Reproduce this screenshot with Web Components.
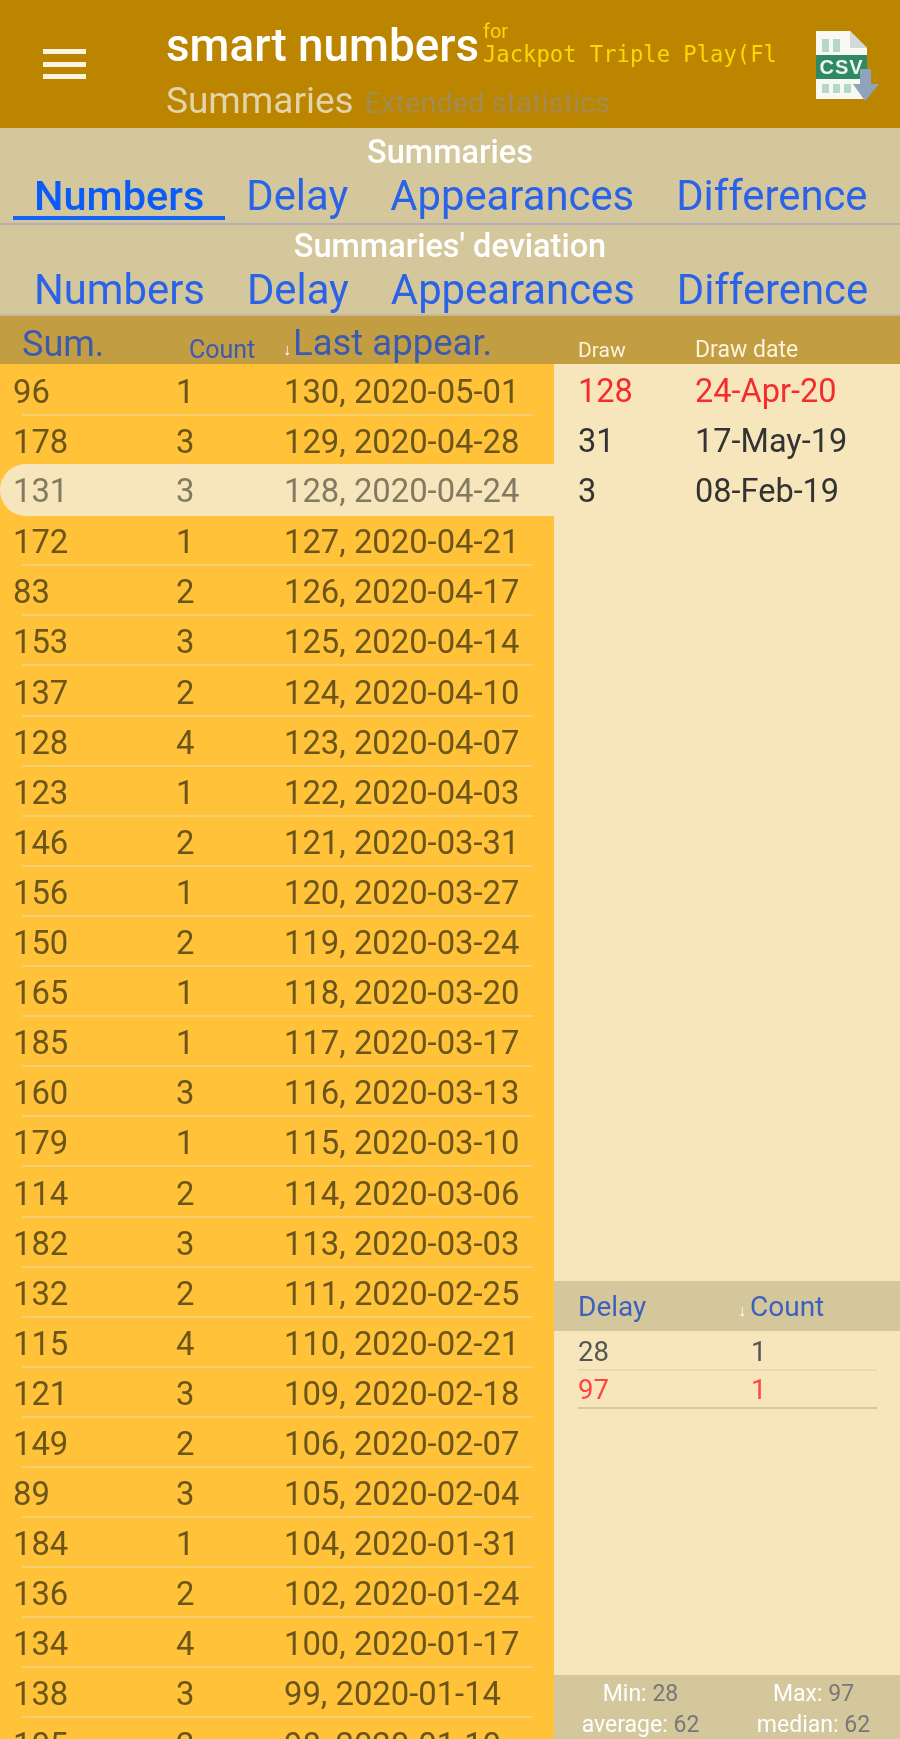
<!DOCTYPE html>
<html>
<head>
<meta charset="utf-8">
<title>smart numbers</title>
<style>
  html, body { margin: 0; height: 1739px; overflow: hidden; background: #f7e6bc; }
  body { font-family: Roboto, "Liberation Sans", sans-serif; }
</style>
</head>
<body>
<stats-app></stats-app>
<script>
class AppHeader extends HTMLElement {
  constructor() {
    super();
    this.attachShadow({ mode: "open" }).innerHTML = `
      <style>
        :host { display: flex; flex: none; height: 128px; background: #bb8500; box-sizing: border-box; padding-left: 43px; align-items: center; position: relative; }
        .burger { width: 43px; height: 30px; display: flex; flex-direction: column; justify-content: space-between; margin-right: 80px; }
        .burger i { display: block; height: 5px; background: #fbf3e0; }
        .main { flex: 1; display: flex; flex-direction: column; }
        .top { display: flex; height: 63px; }
        .title { font-size: 45.8px; font-weight: 500; color: #fff; line-height: 58px; margin-top: 10px; white-space: nowrap; }
        .for { margin: 13px 0 0 4px; color: #fdd800; }
        .for div:first-child { font-size: 20px; line-height: 22px; }
        .for div:last-child { font: 22.2px/25px "DejaVu Sans Mono", monospace; white-space: nowrap; }
        .sub { display: flex; align-items: baseline; gap: 11px; margin-top: 10px; white-space: nowrap; }
        .sub b { font-weight: 400; font-size: 37px; line-height: 42px; color: #e3d3a8; }
        .sub span { font-size: 29px; color: #a48b4e; }
        svg { position: absolute; left: 813px; top: 29px; }
      </style>
      <div class="burger"><i></i><i></i><i></i></div>
      <div class="main">
        <div class="top">
          <div class="title">smart numbers</div>
          <div class="for"><div>for</div><div>Jackpot Triple Play(Fl</div></div>
        </div>
        <div class="sub"><b>Summaries</b><span>Extended statistics</span></div>
      </div>
      <svg width="70" height="74" viewBox="0 0 70 74">
        <path d="M3 2H37L54 19V70H3Z" fill="#f8f8f4"/>
        <path d="M37 2V19H54Z" fill="#d5d8d8"/>
        <g fill="#b5d8c4">
          <rect x="9" y="10" width="7" height="13"/><rect x="20" y="10" width="7" height="13"/>
          <rect x="9" y="55" width="7" height="9"/><rect x="20" y="55" width="7" height="9"/><rect x="31" y="55" width="7" height="9"/>
        </g>
        <rect x="3" y="26" width="51" height="24" fill="#2f8a63"/>
        <text x="28.5" y="45" text-anchor="middle" font-family="Liberation Sans, sans-serif" font-size="20" font-weight="700" fill="#eef5ef" letter-spacing="1">CSV</text>
        <path d="M47 40H58V55H66L52 72L40 55H47Z" fill="#8fa3bb"/>
      </svg>`;
  }
}

class TabBar extends HTMLElement {
  connectedCallback() {
    const active = this.getAttribute("active");
    const tabs = ["Numbers", "Delay", "Appearances", "Difference"]
      .map(t => `<div class="tab ${t === active ? "on" : ""}">${t}</div>`).join("");
    this.attachShadow({ mode: "open" }).innerHTML = `
      <style>
        :host { display: block; flex: none; background: #d5c79c; box-sizing: border-box; height: var(--h); border-bottom: 2px solid var(--line); }
        .head { text-align: center; color: #fff; font-size: 32.5px; font-weight: 500; line-height: 34px; padding-top: var(--pad); }
        .tabs { display: flex; padding-left: 13px; }
        .tab { font-size: 41.8px; line-height: 54px; color: #2a62e8; padding: 0 21px; height: 51px; box-sizing: border-box; }
        .tab.on { color: #0a5cf8; font-size: 41.5px; font-weight: 500; border-bottom: 4px solid #1565f5; }
      </style>
      <div class="head">${this.getAttribute("heading")}</div>
      <div class="tabs">${tabs}</div>`;
  }
}

class SumRow extends HTMLElement {
  connectedCallback() {
    const [sum, count, last] = this.getAttribute("cells").split("|");
    this.attachShadow({ mode: "open" }).innerHTML = `
      <style>
        :host { display: block; height: 50.1px; position: relative; color: #6b5518; font-size: 32.8px; }
        .row { display: grid; grid-template-columns: 163px 108px 1fr; height: 50px; line-height: 56px; padding-left: 13px; white-space: nowrap; }
        .sep { height: 2px; margin: 0 21px -2px 22px; background: #f7d06f; }
        :host([selected]) .row { background: #f7e6bc; border-radius: 26px 0 0 26px; height: 52px; color: #837a62; line-height: 54px; position: relative; }
        :host([selected]) .sep { display: none; }
      </style>
      <div class="row"><span>${sum}</span><span>${count}</span><span>${last}</span></div>
      <div class="sep"></div>`;
  }
}

class StatsApp extends HTMLElement {
  constructor() {
    super();
    const data = `96|1|130, 2020-05-01
178|3|129, 2020-04-28
131|3|128, 2020-04-24
172|1|127, 2020-04-21
83|2|126, 2020-04-17
153|3|125, 2020-04-14
137|2|124, 2020-04-10
128|4|123, 2020-04-07
123|1|122, 2020-04-03
146|2|121, 2020-03-31
156|1|120, 2020-03-27
150|2|119, 2020-03-24
165|1|118, 2020-03-20
185|1|117, 2020-03-17
160|3|116, 2020-03-13
179|1|115, 2020-03-10
114|2|114, 2020-03-06
182|3|113, 2020-03-03
132|2|111, 2020-02-25
115|4|110, 2020-02-21
121|3|109, 2020-02-18
149|2|106, 2020-02-07
89|3|105, 2020-02-04
184|1|104, 2020-01-31
136|2|102, 2020-01-24
134|4|100, 2020-01-17
138|3|99, 2020-01-14
105|2|98, 2020-01-10`.split("\n");
    const rows = data.map(r => `<sum-row cells="${r}"${r.startsWith("131|") ? " selected" : ""}></sum-row>`).join("");
    this.attachShadow({ mode: "open" }).innerHTML = `
      <style>
        :host { display: flex; flex-direction: column; height: 1739px; overflow: hidden; font-family: Roboto, "Liberation Sans", sans-serif; filter: blur(.6px); }
        .tabs1 { --h: 97px; --pad: 7px; --line: #b4abbd; }
        .tabs2 { --h: 91px; --pad: 4px; --line: #c7b9a0; }
        .body { flex: 1; display: grid; grid-template-columns: 554px 346px; grid-template-rows: minmax(0, 1fr); min-height: 0; }
        .left { background: #ffc238; overflow: hidden; min-height: 0; }
        .lhead { display: grid; grid-template-columns: 167px 94px 1fr; height: 48px; background: #c29d41; color: #3b5bb0; padding-left: 22px; align-items: center; white-space: nowrap; }
        .lhead .a { font-size: 36px; padding-top: 7px; }
        .lhead .b { font-size: 25px; padding-top: 17px; }
        .lhead .c { font-size: 36.5px; padding-top: 4px; }
        .lhead i { font-style: normal; font-weight: 700; font-size: 16px; color: #fff; margin-right: 2px; }
        .right { background: #f7e6bc; display: flex; flex-direction: column; min-height: 0; }
        .rhead { display: grid; grid-template-columns: 117px 1fr; height: 48px; flex: none; background: #c29d41; color: #fbf3dc; padding: 19px 0 0 24px; box-sizing: border-box; align-items: center; }
        .rhead span:first-child { font-size: 21px; }
        .rhead span:last-child { font-size: 23px; }
        .draws { flex: 0 0 917px; font-size: 32.5px; color: #333; }
        .draws div { display: grid; grid-template-columns: 117px 1fr; padding-left: 24px; height: 50px; line-height: 54px; }
        .red { color: #f42c2c; }
        .dhead { display: grid; grid-template-columns: 160px 1fr; height: 50px; flex: none; background: #d5c79c; color: #3f5fc0; font-size: 28px; align-items: center; padding-left: 24px; }
        .dhead i { font-style: normal; font-weight: 700; color: #fff; font-size: 16px; margin-right: 4px; }
        .delay { flex: 1; padding: 0 23px 0 24px; font-size: 27.5px; color: #555; }
        .delay div { display: grid; grid-template-columns: 173px 1fr; height: 38px; line-height: 42px; border-bottom: 2px solid #e8dab2; }
        .delay .red { height: 36px; line-height: 38px; border-bottom-color: #d5c79c; color: #f44; }
        .totals { height: 64px; flex: none; box-sizing: border-box; padding-top: 3px; background: #d5c79c; display: grid; grid-template-columns: 1fr 1fr; font-size: 23px; color: #777; text-align: center; line-height: 31px; white-space: nowrap; }
        .totals b { font-weight: 400; color: #fff; }
      </style>
      <app-header></app-header>
      <tab-bar class="tabs1" heading="Summaries" active="Numbers"></tab-bar>
      <tab-bar class="tabs2" heading="Summaries' deviation"></tab-bar>
      <div class="body">
        <div class="left">
          <div class="lhead"><span class="a">Sum.</span><span class="b">Count</span><span class="c"><i>↓</i>Last appear.</span></div>
          ${rows}
        </div>
        <div class="right">
          <div class="rhead"><span>Draw</span><span>Draw date</span></div>
          <div class="draws">
            <div class="red"><span>128</span><span>24-Apr-20</span></div>
            <div><span>31</span><span>17-May-19</span></div>
            <div><span>3</span><span>08-Feb-19</span></div>
          </div>
          <div class="dhead"><span>Delay</span><span><i>↓</i>Count</span></div>
          <div class="delay">
            <div><span>28</span><span>1</span></div>
            <div class="red"><span>97</span><span>1</span></div>
          </div>
          <div class="totals">
            <span><b>Min:</b> 28</span><span><b>Max:</b> 97</span>
            <span><b>average:</b> 62</span><span><b>median:</b> 62</span>
          </div>
        </div>
      </div>`;
  }
}

customElements.define("app-header", AppHeader);
customElements.define("tab-bar", TabBar);
customElements.define("sum-row", SumRow);
customElements.define("stats-app", StatsApp);
</script>
</body>
</html>
